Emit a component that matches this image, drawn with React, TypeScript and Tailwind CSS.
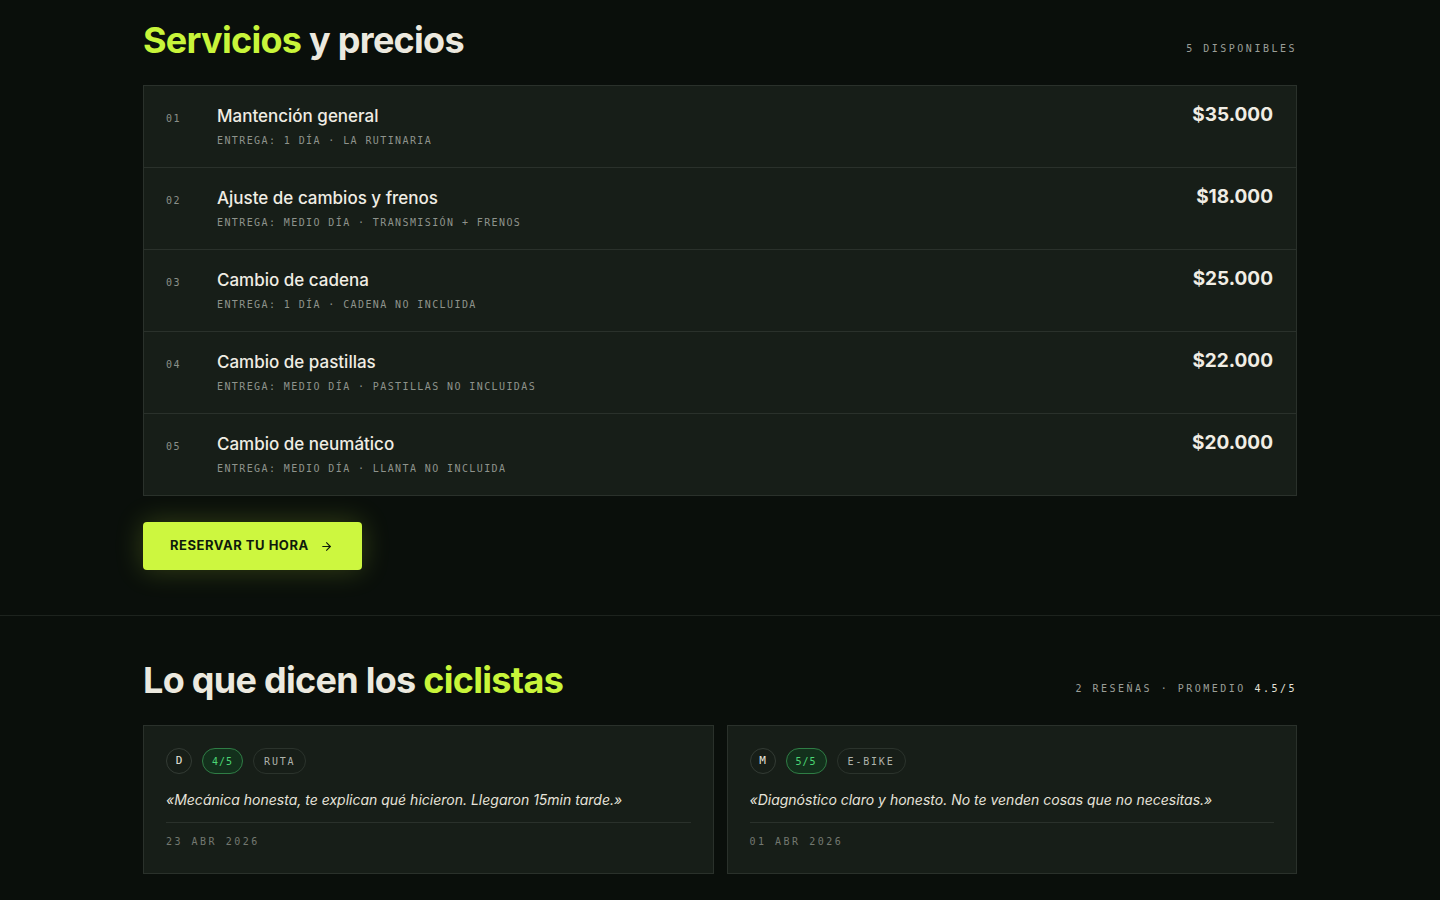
import { ArrowRight } from 'lucide-react';

const sans = "font-['Inter','Noto_Sans',sans-serif]";
const mono = "font-['DejaVu_Sans_Mono','Liberation_Mono',monospace]";

const services = [
  { n: '01', name: 'Mantención general', meta: 'Entrega: 1 día · La rutinaria', price: '$35.000' },
  { n: '02', name: 'Ajuste de cambios y frenos', meta: 'Entrega: medio día · Transmisión + frenos', price: '$18.000' },
  { n: '03', name: 'Cambio de cadena', meta: 'Entrega: 1 día · Cadena no incluida', price: '$25.000' },
  { n: '04', name: 'Cambio de pastillas', meta: 'Entrega: medio día · Pastillas no incluidas', price: '$22.000' },
  { n: '05', name: 'Cambio de neumático', meta: 'Entrega: medio día · Llanta no incluida', price: '$20.000' },
];

const reviews = [
  { initial: 'D', score: '4/5', tag: 'Ruta', text: '«Mecánica honesta, te explican qué hicieron. Llegaron 15min tarde.»', date: '23 abr 2026' },
  { initial: 'M', score: '5/5', tag: 'E-bike', text: '«Diagnóstico claro y honesto. No te venden cosas que no necesitas.»', date: '01 abr 2026' },
];

export default function App() {
  return (
    <div className={`min-h-screen bg-[#0a0f0b] text-[#ece9df] ${sans}`}>
      <section className="pt-[18px] pb-[45px]">
        <div className="w-[1154px] mx-auto">
          <div className="flex items-end justify-between mb-[23px]">
            <h2 className="text-[36px] font-bold tracking-[-0.02em] leading-[44px]">
              <span className="text-[#c8f53a]">Servicios</span> y precios
            </h2>
            <span className={`${mono} text-[10px] tracking-[0.25em] uppercase text-[#9a9e98] mb-[6px]`}>5 disponibles</span>
          </div>

          <ul className="border-x border-b border-[#2a312b] bg-[#171e18]">
            {services.map((s) => (
              <li key={s.n} className="flex items-start h-[82px] border-t border-[#2a312b] pl-[22px] pr-[23px] pt-[18px]">
                <span className={`${mono} w-[51px] text-[10px] tracking-[0.15em] text-[#8b908a] pt-[7px]`}>{s.n}</span>
                <div className="flex-1">
                  <h3 className="text-[17px] font-medium leading-[24px] text-[#f0ede4]">{s.name}</h3>
                  <p className={`${mono} mt-[5px] text-[10px] tracking-[0.14em] uppercase text-[#8e938c]`}>{s.meta}</p>
                </div>
                <span className="text-[19px] font-bold leading-[22px] text-[#f0ede4]">{s.price}</span>
              </li>
            ))}
          </ul>

          <button className="mt-[26px] h-[48px] pl-[27px] pr-[29px] flex items-center gap-[11px] rounded-[4px] bg-[#cdf73f] text-[#0f1a0c] text-[13px] font-bold uppercase tracking-[0.04em] shadow-[0_0_28px_rgba(200,245,58,0.22)]">
            Reservar tu hora
            <ArrowRight size={13} strokeWidth={2} />
          </button>
        </div>
      </section>

      <section className="border-t border-[#1d231e] pt-[42px] pb-[30px]">
        <div className="w-[1154px] mx-auto">
          <div className="flex items-end justify-between mb-[23px]">
            <h2 className="text-[36px] font-bold tracking-[-0.02em] leading-[44px]">
              Lo que dicen los <span className="text-[#c8f53a]">ciclistas</span>
            </h2>
            <span className={`${mono} text-[10px] tracking-[0.25em] uppercase text-[#9a9e98] mb-[6px]`}>
              2 reseñas · promedio <span className="text-[#e6e3da]">4.5/5</span>
            </span>
          </div>

          <div className="grid grid-cols-2 gap-[13px]">
            {reviews.map((r) => (
              <article key={r.initial} className="border border-[#2a312b] bg-[#171e18] px-[22px] pt-[22px] pb-[24px]">
                <div className="flex items-center gap-[10px]">
                  <span className={`${mono} w-[26px] h-[26px] rounded-full border border-[#333b34] flex items-center justify-center text-[11px] text-[#e6e3da]`}>
                    {r.initial}
                  </span>
                  <span className={`${mono} h-[26px] px-[9px] rounded-full border border-[#2f7d45] bg-[#13301c] flex items-center text-[10px] tracking-[0.1em] text-[#4bd675]`}>
                    {r.score}
                  </span>
                  <span className={`${mono} h-[26px] px-[10px] rounded-full border border-[#2b332c] flex items-center text-[10px] tracking-[0.18em] uppercase text-[#aeb2ab]`}>
                    {r.tag}
                  </span>
                </div>
                <p className="mt-[16px] text-[14px] italic leading-[20px] text-[#e6e3da]">{r.text}</p>
                <div className={`${mono} mt-[12px] border-t border-[#2a312b] pt-[12px] text-[10px] leading-[14px] tracking-[0.25em] uppercase text-[#737870]`}>
                  {r.date}
                </div>
              </article>
            ))}
          </div>
        </div>
      </section>
    </div>
  );
}
